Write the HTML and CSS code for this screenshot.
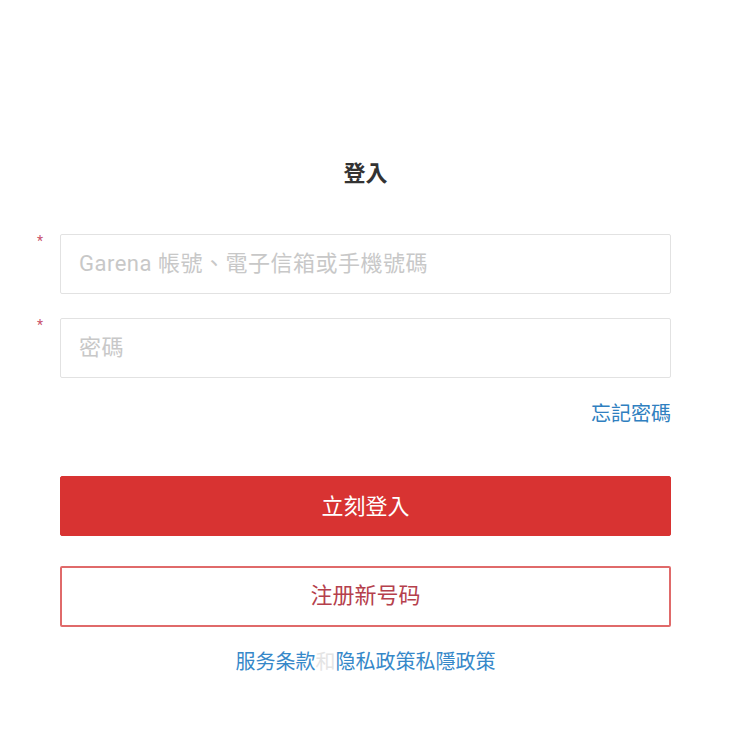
FILE: index.html
```html
<!DOCTYPE html>
<html lang="zh-Hant">
<head>
<meta charset="utf-8">
<title>登入</title>
<link rel="stylesheet" href="styles.css">
</head>
<body>
<main class="login">
  <h1 class="title">登入</h1>
  <form class="form">
    <div class="field">
      <span class="req">*</span>
      <input class="input" type="text" placeholder="Garena 帳號、電子信箱或手機號碼">
    </div>
    <div class="field">
      <span class="req">*</span>
      <input class="input" type="password" placeholder="密碼">
    </div>
    <div class="forgot-row"><a class="forgot" href="#">忘記密碼</a></div>
    <button class="btn btn-primary" type="button">立刻登入</button>
    <button class="btn btn-outline" type="button">注册新号码</button>
  </form>
  <p class="terms"><a href="#">服务条款</a><span class="and">和</span><a href="#">隐私政策私隱政策</a></p>
</main>
</body>
</html>
```
FILE: styles.css
```css
* { box-sizing: border-box; }
html, body { margin: 0; padding: 0; background: #ffffff; }
body {
  font-family: Roboto, "Noto Sans CJK TC", "Noto Sans CJK SC", sans-serif;
  color: #333;
}
.login {
  width: 611px;
  margin-left: 60px;
  padding-top: 159px;
}
.title {
  margin: 0;
  height: 30px;
  line-height: 30px;
  text-align: center;
  font-size: 22px;
  font-weight: 700;
  color: #333;
}
.form {
  margin-top: 45px;
  display: flex;
  flex-direction: column;
}
.field {
  position: relative;
  margin-bottom: 24px;
}
.field:nth-child(2) { margin-bottom: 0; }
.req {
  position: absolute;
  left: -23px;
  top: 0;
  color: #c9536b;
  font-size: 14px;
  line-height: 14px;
}
.input {
  display: block;
  width: 100%;
  height: 60px;
  border: 1px solid #e2e2e2;
  border-radius: 2px;
  padding: 0 18px 2px;
  font-family: Roboto, "Noto Sans CJK TC", sans-serif;
  font-size: 22px;
  letter-spacing: 0.5px;
  color: #333;
  background: #fff;
  outline: none;
}
.input::placeholder { color: #c8c8c8; }
.forgot-row {
  margin-top: 24px;
  display: flex;
  justify-content: flex-end;
  height: 24px;
}
.forgot {
  font-size: 20px;
  line-height: 24px;
  color: #2f7fc0;
  text-decoration: none;
}
.btn {
  display: block;
  width: 100%;
  height: 60px;
  border-radius: 2px;
  padding: 0 0 5px;
  font-family: "Noto Sans CJK TC", "Noto Sans CJK SC", sans-serif;
  font-size: 22px;
  cursor: pointer;
}
.btn-primary {
  margin-top: 50px;
  background: #d83332;
  border: 1px solid #d83332;
  color: #fff;
}
.btn-outline {
  margin-top: 30px;
  height: 61px;
  padding-bottom: 7px;
  background: #fff;
  border: 2px solid #e06a6a;
  color: #b5404c;
}
.terms {
  margin: 22px 0 0;
  text-align: center;
  font-family: "Noto Sans CJK SC", "Noto Sans CJK TC", sans-serif;
  font-size: 20px;
  line-height: 24px;
}
.terms a { color: #3688c9; text-decoration: none; }
.terms .and { color: #e4e4e4; }
```
